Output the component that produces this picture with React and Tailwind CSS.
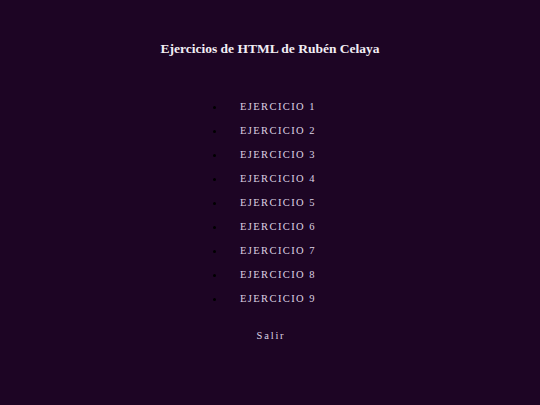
export default function App() {
  const items = [1, 2, 3, 4, 5, 6, 7, 8, 9];
  return (
    <div className="w-[540px] h-[405px] bg-[#1d0524] text-[#ddd3e3]" style={{ fontFamily: '"Liberation Serif", "Times New Roman", serif' }}>
      <div className="pt-[40px] h-[95px]">
        <h1 className="text-center font-bold text-[13.5px] leading-[18px] text-[#f2eef4]">Ejercicios de HTML de Rubén Celaya</h1>
      </div>
      <ul className="flex flex-col">
        {items.map((n) => (
          <li key={n} className="flex items-center h-[24px]">
            <span className="ml-[213px] w-[3px] h-[3px] rounded-full bg-black"></span>
            <span className="ml-[24px] text-[10.5px] tracking-[1.4px] leading-[12px]">EJERCICIO {n}</span>
          </li>
        ))}
      </ul>
      <div className="mt-[19px] text-center text-[10.5px] tracking-[1.8px] leading-[12px] pl-[2px]">Salir</div>
    </div>
  );
}
